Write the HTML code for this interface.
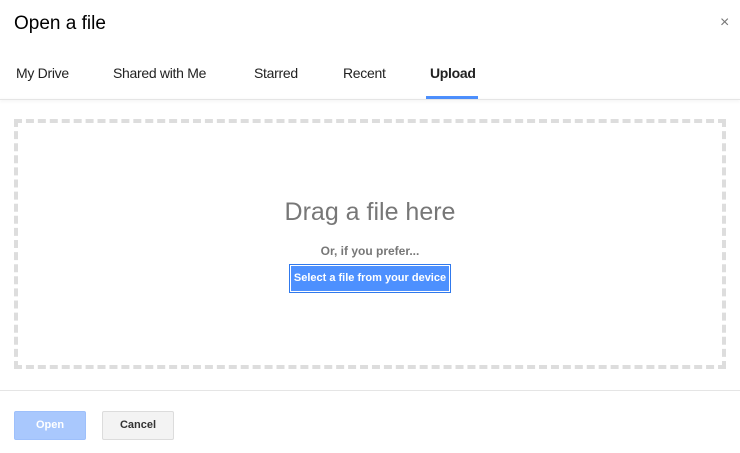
<!DOCTYPE html><html><head><style>
body{margin:0;width:740px;height:453px;background:#fff;font-family:"Liberation Sans",Arial,sans-serif;position:relative;overflow:hidden}
.a{position:absolute;white-space:nowrap}
</style></head><body>
<div class="a" style="left:14px;top:13px;font-size:19px;color:#000">Open a file</div>
<div class="a" style="left:720px;top:14px;font-size:16px;color:#777">×</div>
<div class="a" style="left:16px;top:65px;font-size:14px;color:#222;letter-spacing:-0.3px">My Drive</div>
<div class="a" style="left:113px;top:65px;font-size:14px;color:#222;letter-spacing:-0.3px">Shared with Me</div>
<div class="a" style="left:254px;top:65px;font-size:14px;color:#222;letter-spacing:-0.3px">Starred</div>
<div class="a" style="left:343px;top:65px;font-size:14px;color:#222;letter-spacing:-0.3px">Recent</div>
<div class="a" style="left:430px;top:65px;font-size:14px;color:#222;font-weight:bold;letter-spacing:-0.3px">Upload</div>
<div class="a" style="left:426px;top:96px;width:52px;height:3px;background:#4d90fe"></div>
<div class="a" style="left:0;top:99px;width:740px;height:1px;background:#e5e5e5;box-shadow:0 1px 3px rgba(0,0,0,.12)"></div>
<div class="a" style="left:14px;top:119px;width:704px;height:242px;border:4px dashed #ddd"></div>
<div class="a" style="left:0;width:740px;text-align:center;top:198px;font-size:25px;color:#777">Drag a file here</div>
<div class="a" style="left:0;width:740px;text-align:center;top:244px;font-size:12px;font-weight:bold;color:#777">Or, if you prefer...</div>
<div class="a" style="left:289px;top:264px;width:160px;height:27px;background:#4d90fe;border:1px solid #3079ed;box-shadow:inset 0 0 0 1px #fff;color:#fff;font-size:11px;font-weight:bold;text-align:center;line-height:27px">Select a file from your device</div>
<div class="a" style="left:0;top:390px;width:740px;height:1px;background:#e5e5e5"></div>
<div class="a" style="left:14px;top:411px;width:70px;height:27px;background:#a9c8fd;border:1px solid #9ec0fb;border-radius:2px;color:#fff;font-size:11px;font-weight:bold;text-align:center;line-height:27px">Open</div>
<div class="a" style="left:102px;top:411px;width:70px;height:27px;background:#f3f3f3;border:1px solid #dcdcdc;border-radius:2px;color:#333;font-size:11px;font-weight:bold;text-align:center;line-height:27px">Cancel</div>
</body></html>
